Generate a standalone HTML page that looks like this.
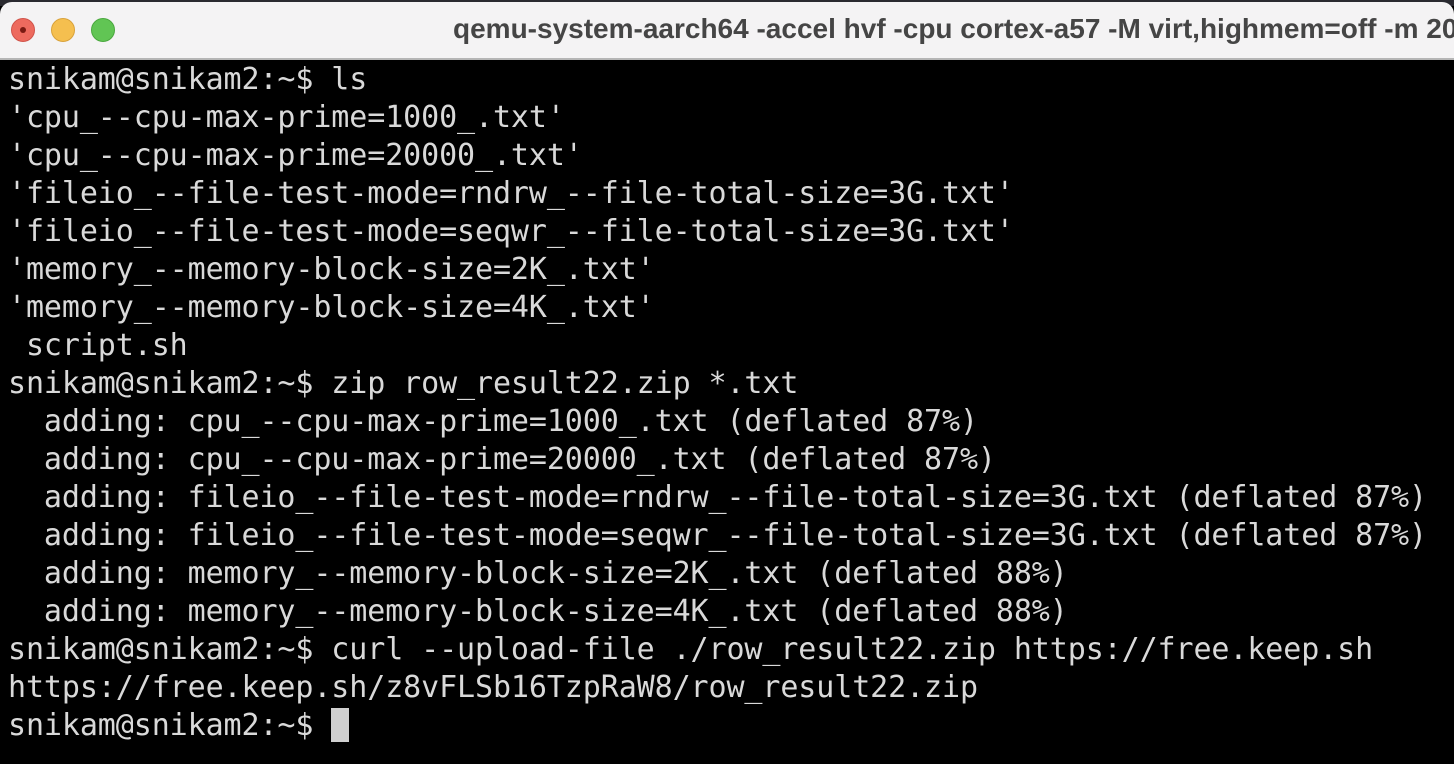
<!DOCTYPE html>
<html><head><style>
html,body{margin:0;padding:0;width:1454px;height:764px;overflow:hidden;background:#000}
.win{position:absolute;left:0;top:0;width:1454px;height:764px;background:#000;}
.bar{position:absolute;left:0;top:2px;width:1454px;height:56px;background:#f4f3f4;border-radius:12px 12px 0 0;border-bottom:2px solid #b5b5b5;overflow:hidden}
.topedge{position:absolute;left:0;top:0;width:1454px;height:6px;background:#2a2a30}
.dot{position:absolute;top:16px;width:24px;height:24px;border-radius:50%}
.title{position:absolute;left:453px;top:11px;font:bold 28px "Liberation Sans",sans-serif;color:#454545;white-space:nowrap}
pre{position:absolute;left:8px;top:61px;margin:0;font:30px/38px "DejaVu Sans Mono",monospace;color:#d9d9d9;letter-spacing:-0.1px}
.cur{display:inline-block;width:18px;height:34px;background:#d0d0d0;vertical-align:-7px}
</style></head><body>
<div class="win">
<div class="topedge"></div>
<div class="bar">
<div class="dot" style="left:11px;background:#ed6a5e;border:1px solid #d0534a;box-sizing:border-box"><div style="position:absolute;left:8px;top:8px;width:6px;height:6px;border-radius:50%;background:#7a1a12"></div></div>
<div class="dot" style="left:51px;background:#f5bf4f;border:1px solid #d9a23a;box-sizing:border-box"></div>
<div class="dot" style="left:91px;background:#61c554;border:1px solid #4aa83e;box-sizing:border-box"></div>
<div class="title">qemu-system-aarch64 -accel hvf -cpu cortex-a57 -M virt,highmem=off -m 2048</div>
</div>
<pre>snikam@snikam2:~$ ls
'cpu_--cpu-max-prime=1000_.txt'
'cpu_--cpu-max-prime=20000_.txt'
'fileio_--file-test-mode=rndrw_--file-total-size=3G.txt'
'fileio_--file-test-mode=seqwr_--file-total-size=3G.txt'
'memory_--memory-block-size=2K_.txt'
'memory_--memory-block-size=4K_.txt'
 script.sh
snikam@snikam2:~$ zip row_result22.zip *.txt
  adding: cpu_--cpu-max-prime=1000_.txt (deflated 87%)
  adding: cpu_--cpu-max-prime=20000_.txt (deflated 87%)
  adding: fileio_--file-test-mode=rndrw_--file-total-size=3G.txt (deflated 87%)
  adding: fileio_--file-test-mode=seqwr_--file-total-size=3G.txt (deflated 87%)
  adding: memory_--memory-block-size=2K_.txt (deflated 88%)
  adding: memory_--memory-block-size=4K_.txt (deflated 88%)
snikam@snikam2:~$ curl --upload-file ./row_result22.zip https://free.keep.sh
https://free.keep.sh/z8vFLSb16TzpRaW8/row_result22.zip
snikam@snikam2:~$ <span class="cur"></span></pre>
</div>
</body></html>
